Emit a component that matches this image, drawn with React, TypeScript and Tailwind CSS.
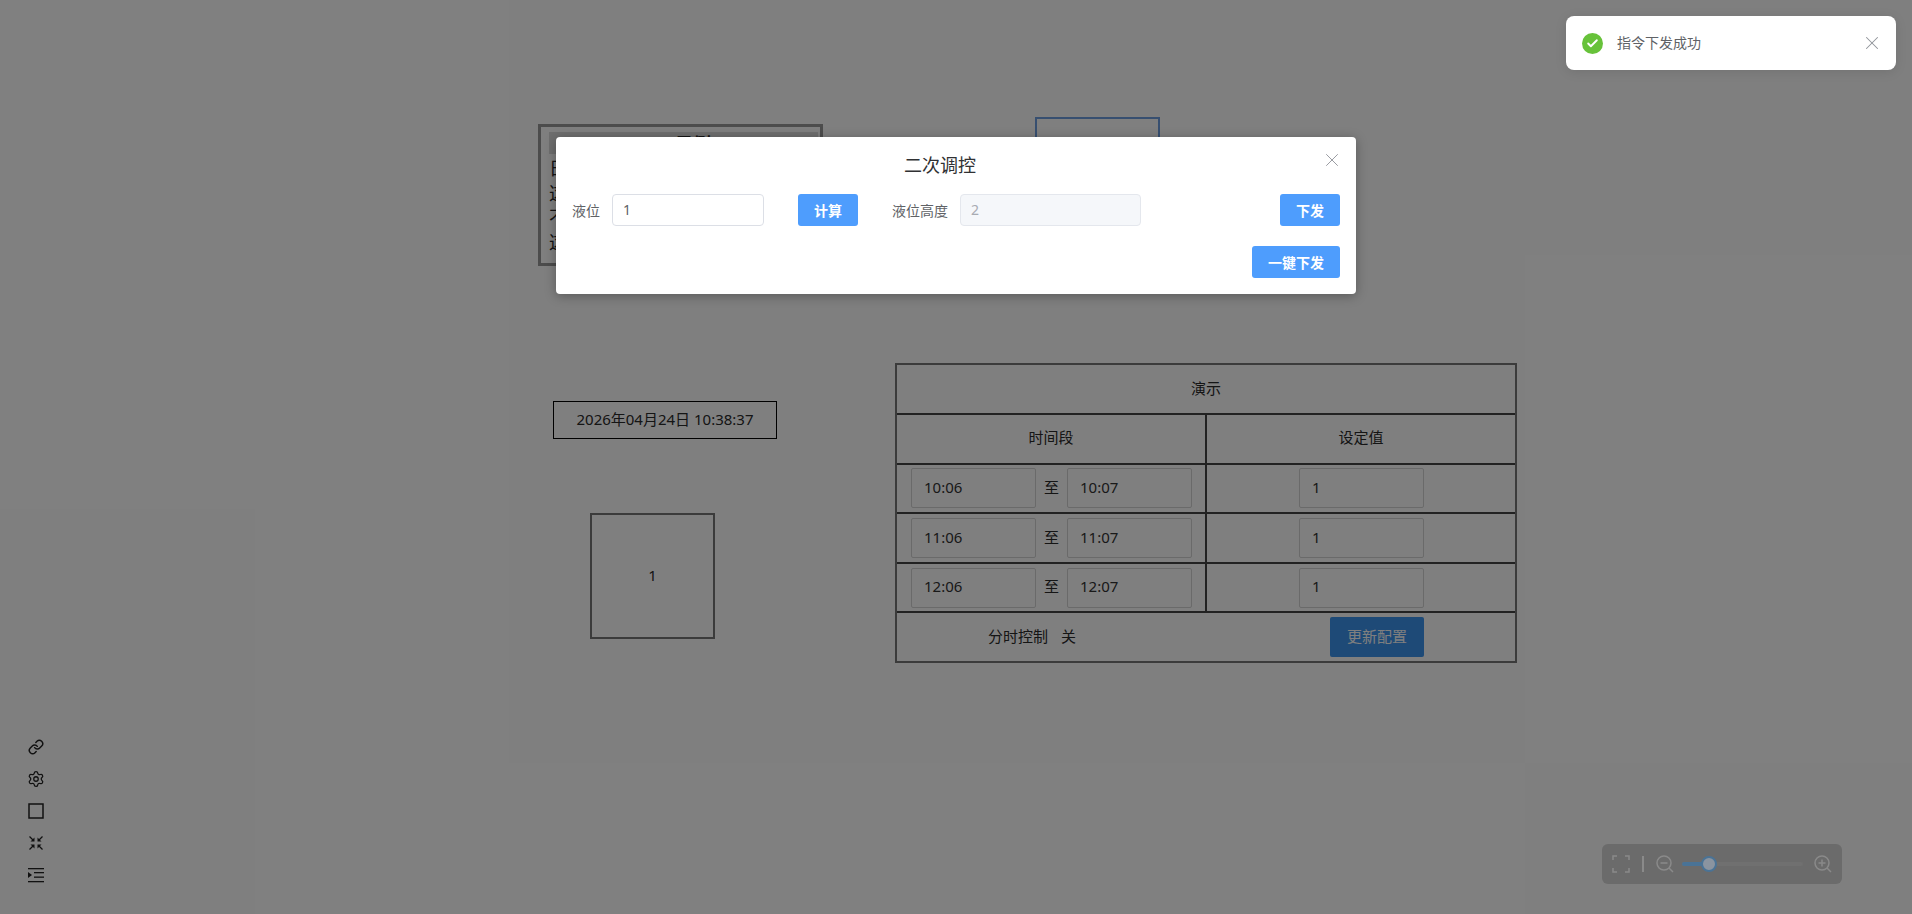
import { Check, Link, Settings, X } from "lucide-react";

const fontStack = "font-['Noto_Sans','Noto_Sans_CJK_SC',sans-serif]";

function TimeInput({ value }: { value: string }) {
  return (
    <div className="flex h-10 w-[125px] items-center rounded-[2px] border border-[#d4d4d4] px-3 pb-[2px] text-[15px] text-[#333]">
      {value}
    </div>
  );
}

function Row({ from, to }: { from: string; to: string }) {
  return (
    <div className="grid h-[49.6px] grid-cols-[310px_1fr] border-t-2 border-[#444]">
      <div className="flex items-center gap-2 border-r-2 border-[#444] pl-[14px]">
        <TimeInput value={from} />
        <span className="pb-[2px] text-[15px]">至</span>
        <TimeInput value={to} />
      </div>
      <div className="flex items-center pl-[92px]">
        <TimeInput value="1" />
      </div>
    </div>
  );
}

function SideIcons() {
  return (
    <div className="absolute left-[28px] top-[739px] flex flex-col gap-4 text-[#222]">
      <Link className="size-4" strokeWidth={2.2} />
      <Settings className="m-[-1px] size-[18px]" strokeWidth={1.7} />
      <svg width="16" height="16" viewBox="0 0 16 16" fill="none" stroke="currentColor" strokeWidth="1.5">
        <rect x="1" y="1" width="14" height="14" />
      </svg>
      {/* arrows pointing in */}
      <svg width="16" height="16" viewBox="0 0 16 16" fill="none" stroke="currentColor" strokeWidth="1.2">
        <path d="M1.5 1.5L5 5" />
        <path d="M14.5 1.5L11 5" />
        <path d="M1.5 14.5L5 11" />
        <path d="M14.5 14.5L11 11" />
        <g fill="currentColor" stroke="none">
          <path d="M6.5 6.5V2.5L2.5 6.5z" />
          <path d="M9.5 6.5V2.5l4 4z" />
          <path d="M6.5 9.5v4l-4-4z" />
          <path d="M9.5 9.5v4l4-4z" />
        </g>
      </svg>
      <svg width="16" height="16" viewBox="0 0 16 16" fill="currentColor">
        <rect x="0" y="1" width="16" height="1.3" />
        <rect x="6" y="5" width="10" height="1.3" />
        <rect x="6" y="9.5" width="10" height="1.3" />
        <rect x="0" y="14" width="16" height="1.3" />
        <path d="M0 5l4 3-4 3z" />
      </svg>
    </div>
  );
}

function ZoomBar() {
  return (
    <div className="absolute left-[1602px] top-[844px] flex h-10 w-[240px] items-center rounded-[6px] bg-[#6b6b6b] text-[#8a8a8a]">
      <svg className="ml-[10px]" width="18" height="18" viewBox="0 0 18 18" fill="none" stroke="currentColor" strokeWidth="1.5">
        <path d="M1 5V1h4M13 1h4v4M17 13v4h-4M5 17H1v-4" />
      </svg>
      <span className="ml-3 h-4 w-[2px] bg-[#8a8a8a]" />
      <svg className="ml-3" width="18" height="18" viewBox="0 0 18 18" fill="none" stroke="currentColor" strokeWidth="1.5">
        <circle cx="8" cy="8" r="7" />
        <path d="M4.5 8h7M13 13l4 4" />
      </svg>
      <div className="relative ml-2 h-1 w-[121px] rounded-full bg-[#707070]">
        <div className="h-1 w-[27px] rounded-full bg-[#4a7396]" />
        <div className="absolute left-[19px] top-[-6px] size-4 rounded-full border-2 border-[#4a7396] bg-[#8a94a0]" />
      </div>
      <svg className="ml-[11px]" width="18" height="18" viewBox="0 0 18 18" fill="none" stroke="currentColor" strokeWidth="1.5">
        <circle cx="8" cy="8" r="7" />
        <path d="M4.5 8h7M8 4.5v7M13 13l4 4" />
      </svg>
    </div>
  );
}

function Modal() {
  return (
    <div className="absolute left-[556px] top-[137px] h-[157px] w-[800px] rounded-[4px] bg-white pb-4 pr-4 shadow-[0_2px_12px_rgba(0,0,0,0.3)]">
      <div className="relative h-[57px]">
        <div className="absolute left-[348px] top-[16px] text-[18px] leading-6 text-[#303133]">二次调控</div>
        <X className="absolute right-[-3px] top-[12px] size-[22px] text-[#909399]" strokeWidth={1} />
      </div>
      <div className="flex h-8 items-center pl-4 text-[14px]">
        <span className="w-7 text-[#606266]">液位</span>
        <div className="ml-3 flex h-8 w-[152px] items-center rounded-[4px] border border-[#dcdfe6] px-[10px] pb-[1px] text-[#606266]">1</div>
        <button className="ml-[34px] h-8 w-[60px] rounded-[3px] bg-[#4e9dfd] text-[14px] font-bold text-white">计算</button>
        <span className="ml-[34px] w-14 text-[#606266]">液位高度</span>
        <div className="ml-3 flex h-8 w-[181px] items-center rounded-[4px] border border-[#e4e7ed] bg-[#f5f7fa] px-[10px] pb-[1px] text-[#a8abb2]">2</div>
        <button className="ml-auto h-8 w-[60px] rounded-[3px] bg-[#4e9dfd] text-[14px] font-bold text-white">下发</button>
      </div>
      <div className="mt-5 flex justify-end">
        <button className="h-8 w-[88px] rounded-[3px] bg-[#4e9dfd] text-[14px] font-bold text-white">一键下发</button>
      </div>
    </div>
  );
}

export default function App() {
  return (
    <div className={`relative h-[914px] w-[1912px] overflow-hidden bg-white text-[#2a2a2a] ${fontStack}`}>
      {/* canvas nodes */}
      <div className="absolute left-[538px] top-[124px] h-[142px] w-[285px] border-[3px] border-[#999] pl-2 pr-[2px] pt-[5px]">
        <div className="h-[22px] bg-[#ddd] pl-[19px] text-center text-[18px] font-bold leading-[24px]">示例</div>
        <div className="mt-[2px] text-[18px] leading-[24.5px]">
          <div>日</div>
          <div>这</div>
          <div>不</div>
          <div>这</div>
        </div>
      </div>
      <div className="absolute left-[1035px] top-[117px] h-[125px] w-[125px] border-2 border-[#6f9fe0]" />
      <div className="absolute left-[553px] top-[401px] flex h-[38px] w-[224px] items-center justify-center border border-black pb-[2px] text-[15px]">
        2026年04月24日 10:38:37
      </div>
      <div className="absolute left-[590px] top-[513px] flex h-[126px] w-[125px] items-center justify-center border-2 border-[#777] pb-[2px] text-[15px]">1</div>

      <div className="absolute left-[895px] top-[363px] h-[300px] w-[622px] border-2 border-[#777] text-[15px]">
        <div className="flex h-[48px] items-center justify-center pb-[2px]">演示</div>
        <div className="grid h-[49.6px] grid-cols-[310px_1fr] border-t-2 border-[#444]">
          <div className="flex items-center justify-center border-r-2 border-[#444] pb-[4px]">时间段</div>
          <div className="flex items-center justify-center pb-[4px]">设定值</div>
        </div>
        <Row from="10:06" to="10:07" />
        <Row from="11:06" to="11:07" />
        <Row from="12:06" to="12:07" />
        <div className="grid h-[49.6px] grid-cols-[310px_1fr] items-center border-t-2 border-[#444]">
          <div className="flex pb-[2px] pl-[91px]">
            <span>分时控制</span>
            <span className="ml-[13px]">关</span>
          </div>
          <div className="pl-[123px]">
            <button className="h-10 w-[94px] rounded-[2px] bg-[#3c94ee] pb-[2px] text-[15px] text-white">更新配置</button>
          </div>
        </div>
      </div>

      <SideIcons />

      {/* overlay */}
      <div className="absolute inset-0 bg-black/50" />

      <ZoomBar />
      <Modal />

      {/* toast */}
      <div className="absolute left-[1566px] top-4 flex h-[54px] w-[330px] items-center rounded-[8px] bg-white pl-4 pr-[13px] shadow-[0_2px_12px_rgba(0,0,0,0.1)]">
        <span className="flex size-[21px] items-center justify-center rounded-full bg-[#67c23a]">
          <Check className="size-[13px] text-white" strokeWidth={3.5} />
        </span>
        <span className="ml-[14px] pb-[2px] text-[14px] text-[#606266]">指令下发成功</span>
        <X className="ml-auto size-[22px] text-[#909399]" strokeWidth={1.1} />
      </div>
    </div>
  );
}
